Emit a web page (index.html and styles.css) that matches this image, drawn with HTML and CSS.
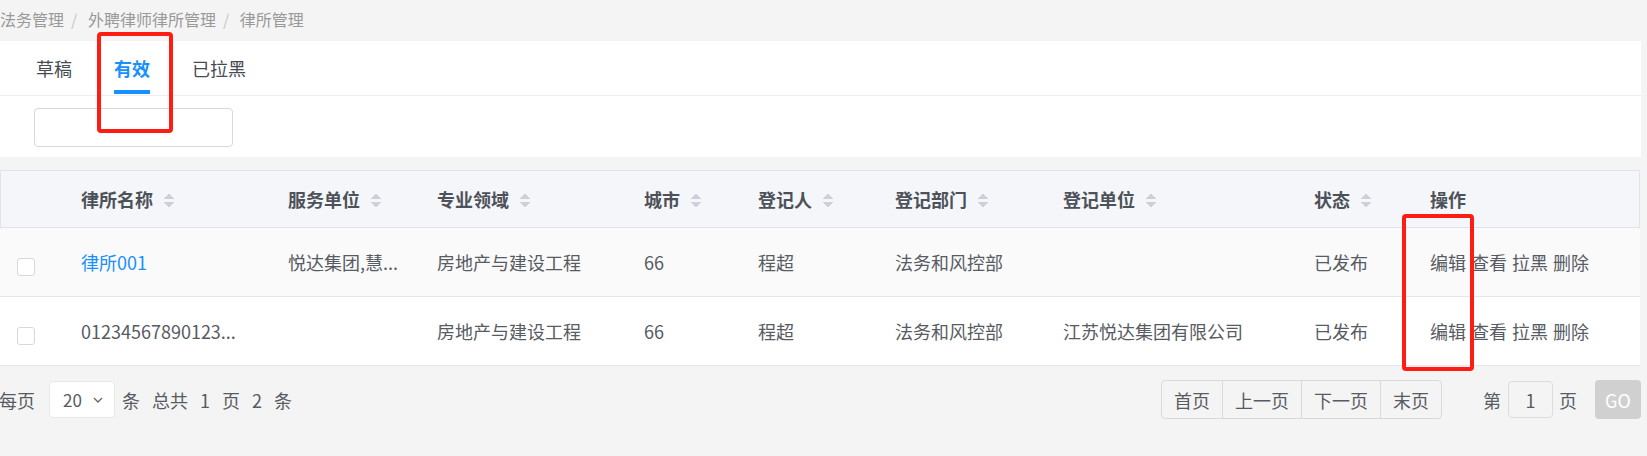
FILE: index.html
```html
<!DOCTYPE html>
<html lang="zh-CN">
<head>
    <meta charset="UTF-8">
    <title>律所管理</title>
    <link rel="stylesheet" href="styles.css">
</head>
<body>
    <div class="page">
        <div class="breadcrumb">
            <span>法务管理</span><span class="sep">/</span>
            <span>外聘律师律所管理</span><span class="sep">/</span>
            <span>律所管理</span>
        </div>

        <div class="panel">
            <div class="tabs">
                <a class="tab">草稿</a>
                <a class="tab active">有效</a>
                <a class="tab">已拉黑</a>
            </div>
            <div class="filter">
                <input class="search" type="text">
            </div>
        </div>

        <table class="grid">
            <colgroup>
                <col style="width:81px">
                <col style="width:207px">
                <col style="width:149px">
                <col style="width:207px">
                <col style="width:114px">
                <col style="width:137px">
                <col style="width:168px">
                <col style="width:251px">
                <col style="width:116px">
                <col>
            </colgroup>
            <thead>
                <tr>
                    <th></th>
                    <th>律所名称<i class="sort"></i></th>
                    <th>服务单位<i class="sort"></i></th>
                    <th>专业领域<i class="sort"></i></th>
                    <th>城市<i class="sort"></i></th>
                    <th>登记人<i class="sort"></i></th>
                    <th>登记部门<i class="sort"></i></th>
                    <th>登记单位<i class="sort"></i></th>
                    <th>状态<i class="sort"></i></th>
                    <th>操作</th>
                </tr>
            </thead>
            <tbody>
                <tr class="striped">
                    <td><span class="check"></span></td>
                    <td><a class="link">律所001</a></td>
                    <td>悦达集团,慧...</td>
                    <td>房地产与建设工程</td>
                    <td>66</td>
                    <td>程超</td>
                    <td>法务和风控部</td>
                    <td></td>
                    <td>已发布</td>
                    <td class="ops"><a>编辑</a><a>查看</a><a>拉黑</a><a>删除</a></td>
                </tr>
                <tr>
                    <td><span class="check"></span></td>
                    <td>01234567890123...</td>
                    <td></td>
                    <td>房地产与建设工程</td>
                    <td>66</td>
                    <td>程超</td>
                    <td>法务和风控部</td>
                    <td>江苏悦达集团有限公司</td>
                    <td>已发布</td>
                    <td class="ops"><a>编辑</a><a>查看</a><a>拉黑</a><a>删除</a></td>
                </tr>
            </tbody>
        </table>

        <div class="pager">
            <div class="pager-left">
                <span class="label-first">每页</span>
                <span class="size-select">20<svg width="10" height="6" viewBox="0 0 10 6"><path d="M1 1l4 4 4-4" fill="none" stroke="#666" stroke-width="1.3"/></svg></span>
                <span class="label-tight">条</span>
                <span>总共</span><span>1</span><span>页</span><span>2</span><span>条</span>
            </div>
            <div class="pager-right">
                <div class="btn-group">
                    <button>首页</button><button>上一页</button><button>下一页</button><button>末页</button>
                </div>
                <span class="jump-label">第</span>
                <input class="page-input" type="text" value="1">
                <span class="jump-label">页</span>
                <button class="go">GO</button>
            </div>
        </div>

        <!-- 标注框 -->
        <div class="mark mark-tab"></div>
        <div class="mark mark-ops"></div>
    </div>
</body>
</html>
```

FILE: styles.css
```css
body {
    margin: 0;
    background-color: #f4f4f4;
    font-family: "Noto Sans CJK SC", "Noto Sans", sans-serif;
    color: #575b63;
    font-size: 18px;
}
.page {
    position: relative;
    width: 1641px;
    height: 456px;
}
.breadcrumb {
    height: 41px;
    line-height: 39px;
    font-size: 16px;
    color: #999;
    white-space: nowrap;
}
.breadcrumb .sep {
    color: #c8c8c8;
    margin: 0 7px;
}
.panel {
    background: white;
}
.tabs {
    display: flex;
    gap: 42px;
    padding-left: 36px;
    height: 54px;
    border-bottom: 1px solid #eee;
}
.tab {
    position: relative;
    line-height: 54px;
    color: #464a53;
    cursor: pointer;
}
.tab.active {
    color: #1890ff;
    font-weight: bold;
}
.tab.active::after {
    content: "";
    position: absolute;
    left: 0;
    right: 0;
    bottom: 1px;
    height: 4px;
    background: #1890ff;
}
.filter {
    height: 61px;
    padding-left: 34px;
    padding-top: 12px;
    box-sizing: border-box;
}
.search {
    width: 199px;
    height: 39px;
    border: 1px solid #d9d9d9;
    border-radius: 4px;
    box-sizing: border-box;
    outline: none;
}
.grid {
    margin-top: 13px;
    width: 1640px;
    table-layout: fixed;
    border-collapse: separate;
    border-spacing: 0;
    background: white;
}
.grid th {
    height: 56px;
    padding: 0;
    text-align: left;
    background: #f5f6fa;
    border-top: 1px solid #dfe4eb;
    border-bottom: 1px solid #dfe4eb;
    color: #4d5159;
    font-weight: bold;
    white-space: nowrap;
}
.grid th:first-child {
    border-left: 1px solid #dfe4eb;
}
.grid th:last-child {
    border-right: 1px solid #dfe4eb;
}
.grid td {
    height: 68px;
    padding: 0;
    border-bottom: 1px solid #e6e6e6;
    white-space: nowrap;
    overflow: hidden;
}
.grid tr.striped td {
    background: #fafafa;
}
.grid td:first-child {
    padding-left: 17px;
    padding-top: 4px;
    box-sizing: border-box;
}
.sort {
    display: inline-block;
    width: 10px;
    height: 16px;
    margin-left: 11px;
    vertical-align: -2px;
    background:
        linear-gradient(to top left, #cdd0d6 50%, transparent 50%) 0 0 / 5px 6px no-repeat,
        linear-gradient(to top right, #cdd0d6 50%, transparent 50%) 5px 0 / 5px 6px no-repeat,
        linear-gradient(to bottom left, #cdd0d6 50%, transparent 50%) 0 9px / 5px 6px no-repeat,
        linear-gradient(to bottom right, #cdd0d6 50%, transparent 50%) 5px 9px / 5px 6px no-repeat;
}
.check {
    display: inline-block;
    width: 18px;
    height: 18px;
    border: 1px solid #d9d9d9;
    border-radius: 3px;
    background: white;
    box-sizing: border-box;
    vertical-align: middle;
}
.link {
    color: #1890ff;
    cursor: pointer;
}
.ops a {
    margin-right: 5px;
    cursor: pointer;
}
.pager {
    display: flex;
    justify-content: space-between;
    align-items: center;
    margin-top: 14px;
    color: #575b63;
}
.pager-left {
    display: flex;
    align-items: center;
    gap: 12px;
}
.label-first {
    margin-left: -1px;
}
.size-select {
    display: flex;
    align-items: center;
    gap: 11px;
    width: 66px;
    height: 37px;
    padding-left: 13px;
    margin: 0 -5px 0 2px;
    border: 1px solid #e8e8e8;
    border-radius: 4px;
    background: white;
    box-sizing: border-box;
    font-size: 17px;
}
.pager-right {
    display: flex;
    align-items: center;
}
.btn-group {
    display: flex;
    border: 1px solid #d9d9d9;
    border-radius: 4px;
    margin-right: 41px;
}
.btn-group button {
    height: 37px;
    padding: 0 12px;
    border: none;
    border-left: 1px solid #d9d9d9;
    background: transparent;
    font-family: inherit;
    font-size: 18px;
    color: #575b63;
    cursor: pointer;
}
.btn-group button:first-child {
    border-left: none;
}
.page-input {
    width: 45px;
    height: 37px;
    margin: 0 6px 0 7px;
    border: 1px solid #dcdcdc;
    border-radius: 4px;
    background: transparent;
    box-sizing: border-box;
    text-align: center;
    font-family: inherit;
    font-size: 18px;
    color: #575b63;
}
.go {
    width: 46px;
    height: 39px;
    margin-left: 18px;
    border: none;
    border-radius: 4px;
    background: #d0d0d0;
    color: white;
    font-family: inherit;
    font-size: 18px;
}
.mark {
    position: absolute;
    border: 4px solid #ff1d13;
    border-radius: 4px;
    box-sizing: border-box;
}
.mark-tab {
    left: 97px;
    top: 32px;
    width: 76px;
    height: 101px;
}
.mark-ops {
    left: 1402px;
    top: 214px;
    width: 72px;
    height: 157px;
}
```
